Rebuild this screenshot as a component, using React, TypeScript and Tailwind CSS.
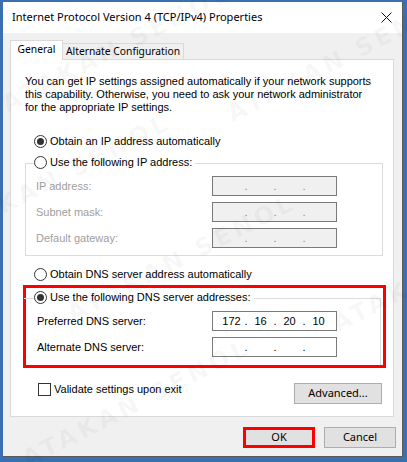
import React from "react";

function Radio({ checked }: { checked?: boolean }) {
  return (
    <span className="flex items-center justify-center w-[13px] h-[13px] rounded-full border border-[#333333] bg-white shrink-0">
      {checked && <span className="w-[7px] h-[7px] rounded-full bg-[#333333]" />}
    </span>
  );
}

function IpField({ value, disabled }: { value?: string[]; disabled?: boolean }) {
  const parts = value ?? ["", "", "", ""];
  return (
    <div
      className={`flex items-center w-[125px] h-[20px] pl-[4px] border border-[#7a7a7a] ${
        disabled ? "bg-[#f0f0f0]" : "bg-white"
      }`}
    >
      {parts.map((p, idx) => (
        <React.Fragment key={idx}>
          <span className="w-[29px] text-center leading-none">{p}</span>
          {idx < 3 && (
            <span className={`w-[0px] flex justify-center leading-none ${disabled ? "text-[#7c8a9a]" : ""}`}>.</span>
          )}
        </React.Fragment>
      ))}
    </div>
  );
}

function FieldRow({ label, value, disabled, width }: { label: string; value?: string[]; disabled?: boolean; width: string }) {
  return (
    <div className="flex items-center h-[20px]">
      <span className={`${width} pl-[11px] whitespace-nowrap ${disabled ? "text-[#a0a0a0]" : "text-black"}`}>{label}</span>
      <IpField value={value} disabled={disabled} />
    </div>
  );
}

function Button({ label, highlight }: { label: string; highlight?: boolean }) {
  return (
    <div
      className={`flex items-center justify-center w-[72px] h-[21px] bg-[#e1e1e1] font-['Noto_Sans',sans-serif] text-[11px] ${
        highlight ? "border-[3px] border-[#ff0000]" : "border border-[#adadad]"
      }`}
    >
      {label}
    </div>
  );
}

export default function App() {
  return (
    <div className="relative w-[407px] h-[462px] bg-[#3a6fb0] pt-[2px] pl-[3px] pr-[4px] pb-[5px] font-['Liberation_Sans',Arial,sans-serif] text-[11px] text-black overflow-hidden">
      <div className="flex flex-col w-full h-full bg-[#f0f0f0] border-r border-b border-[#5a5a5a]">
        {/* Title bar */}
        <div className="flex items-center justify-between h-[31px] bg-white pl-[9px] pr-[9px] shrink-0">
          <span className="font-['Noto_Sans',sans-serif] text-[11px] whitespace-nowrap">
            Internet Protocol Version 4 (TCP/IPv4) Properties
          </span>
          <svg width="11" height="11" viewBox="0 0 11 11" className="mr-[1px]">
            <path d="M0.5 0.5 L10.5 10.5 M10.5 0.5 L0.5 10.5" stroke="#111" strokeWidth="1" />
          </svg>
        </div>

        {/* Tabs */}
        <div className="flex items-end ml-[7px] mt-[7px] h-[20px] font-['Noto_Sans',sans-serif] text-[10.3px] whitespace-nowrap">
          <div className="relative z-10 flex items-center justify-center w-[53px] h-[20px] pb-[1px] bg-white border border-b-0 border-[#d9d9d9]">
            General
          </div>
          <div className="flex items-center justify-center w-[121px] h-[17px] bg-[#f0f0f0] border border-l-0 border-b-0 border-[#d9d9d9]">
            Alternate Configuration
          </div>
        </div>

        {/* Panel */}
        <div className="flex flex-col ml-[7px] w-[384px] h-[358px] -mt-[1px] bg-white border border-[#d9d9d9]">
          <p className="mt-[15px] ml-[14px] leading-[13px] whitespace-nowrap">
            You can get IP settings assigned automatically if your network supports
            <br />
            this capability. Otherwise, you need to ask your network administrator
            <br />
            for the appropriate IP settings.
          </p>

          <div className="flex items-center gap-[3px] ml-[23px] mt-[21px] h-[13px]">
            <Radio checked />
            <span>Obtain an IP address automatically</span>
          </div>

          {/* Static IP group */}
          <div className="relative ml-[14px] mt-[8px] w-[358px] h-[100px]">
            <div className="absolute left-0 right-0 top-[7px] bottom-0 border border-[#dcdcdc]" />
            <div className="relative flex flex-col">
              <div className="flex items-center gap-[3px] ml-[9px] h-[13px] bg-white w-fit pr-[3px]">
                <Radio />
                <span>Use the following IP address:</span>
              </div>
              <div className="flex flex-col gap-[6px] mt-[7px]">
                <FieldRow label="IP address:" width="w-[187px]" disabled />
                <FieldRow label="Subnet mask:" width="w-[187px]" disabled />
                <FieldRow label="Default gateway:" width="w-[187px]" disabled />
              </div>
            </div>
          </div>

          <div className="flex items-center gap-[3px] ml-[23px] mt-[12px] h-[13px]">
            <Radio />
            <span>Obtain DNS server address automatically</span>
          </div>

          {/* DNS group, marked in red */}
          <div className="ml-[12px] mt-[4px] w-[363px] h-[83px] border-[3px] border-[#ff0000]">
            <div className="relative h-full">
              <div className="absolute left-[-2px] right-[2px] top-[10px] bottom-[0px] border-t border-r border-[#dcdcdc]" />
              <div className="relative flex flex-col">
                <div className="flex items-center gap-[3px] ml-[8px] mt-[3px] h-[13px] bg-white w-fit pr-[3px]">
                  <Radio checked />
                  <span>Use the following DNS server addresses:</span>
                </div>
                <div className="flex flex-col gap-[6px] mt-[7px]">
                  <FieldRow label="Preferred DNS server:" value={["172", "16", "20", "10"]} width="w-[186px]" />
                  <FieldRow label="Alternate DNS server:" width="w-[186px]" />
                </div>
              </div>
            </div>
          </div>

          <div className="flex items-start justify-between ml-[27px] mr-[11px] mt-[15px]">
            <div className="flex items-center gap-[3px] h-[13px]">
              <span className="w-[13px] h-[13px] border border-[#333333] bg-white" />
              <span>Validate settings upon exit</span>
            </div>
            <div className="flex items-center justify-center w-[88px] h-[21px] bg-[#e1e1e1] border border-[#adadad] font-['Noto_Sans',sans-serif]">
              Advanced...
            </div>
          </div>
        </div>

        {/* Bottom buttons */}
        <div className="flex justify-end gap-[9px] mt-[10px] mr-[6px]">
          <Button label="OK" highlight />
          <Button label="Cancel" />
        </div>
      </div>

      {/* Watermark */}
      <div className="pointer-events-none absolute inset-0 text-[24px] font-bold tracking-[4px] text-black/[0.04] font-['DejaVu_Sans',sans-serif]">
        <span className="absolute left-[-10px] top-[30px] -rotate-[27deg] whitespace-nowrap">ATAKAN SENOL</span>
        <span className="absolute left-[215px] top-[40px] -rotate-[27deg] whitespace-nowrap">ATAKAN SENOL</span>
        <span className="absolute left-[-70px] top-[160px] -rotate-[27deg] whitespace-nowrap">ATAKAN SENOL</span>
        <span className="absolute left-[55px] top-[240px] -rotate-[27deg] whitespace-nowrap">ATAKAN SENOL</span>
        <span className="absolute left-[320px] top-[250px] -rotate-[27deg] whitespace-nowrap">ATAKAN SENOL</span>
        <span className="absolute left-[10px] top-[385px] -rotate-[27deg] whitespace-nowrap">ATAKAN SENOL</span>
      </div>
    </div>
  );
}
